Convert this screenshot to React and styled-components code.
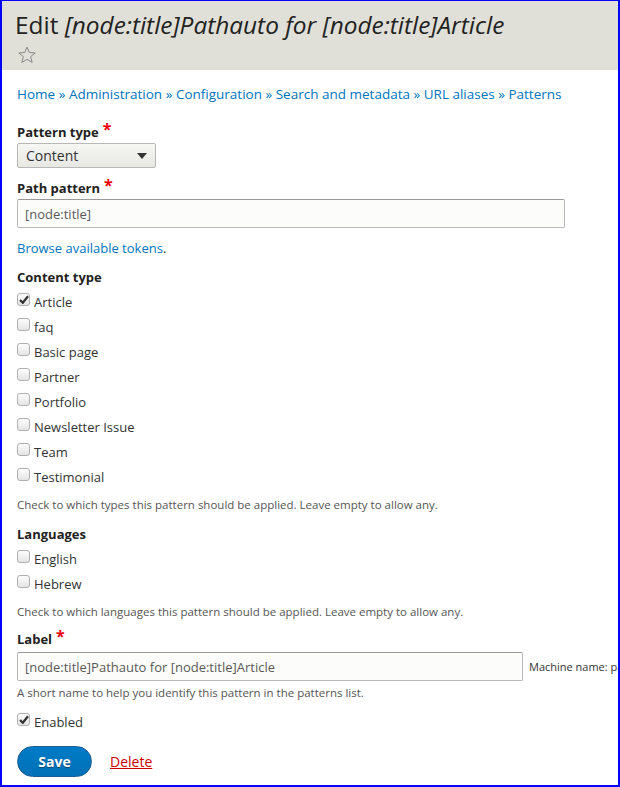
import React from "react";
import styled, { createGlobalStyle } from "styled-components";

const Global = createGlobalStyle`
  html, body { margin: 0; padding: 0; background: #fff; }
  body { font-family: "Open Sans", "DejaVu Sans", sans-serif; color: #333; }
  * { box-sizing: border-box; }
`;

const Frame = styled.div`
  width: 620px;
  height: 787px;
  border: 2px solid #0000ff;
  border-top-width: 1px;
  overflow: hidden;
  background: #fff;
`;

const Header = styled.div`
  background: #e0e0d8;
  padding: 7px 15px 0 13px;
  height: 69px;
`;

const Title = styled.h1`
  margin: 0;
  font-size: 24.4px;
  font-weight: normal;
  color: #222;
  line-height: 34px;
  white-space: nowrap;
  em { font-style: italic; }
`;

const Star = styled.div`
  margin-top: 3px;
  margin-left: 2px;
  height: 22px;
`;

const Content = styled.div`
  padding: 14px 15px 0 15px;
  width: 700px;
`;

const Breadcrumb = styled.div`
  font-size: 13.5px;
  line-height: 20px;
  color: #0074bd;
  margin-bottom: 16px;
`;

const Link = styled.a`
  color: ${(p) => (p.$danger ? "#c00" : "#0074bd")};
  text-decoration: ${(p) => (p.$danger ? "underline" : "none")};
  cursor: pointer;
`;

const TokenLine = styled.div`
  font-size: 13px;
  line-height: 20px;
  color: #333;
`;

const Field = styled.div`
  margin-bottom: ${(p) => p.$gap || 10}px;
`;

const Label = styled.div`
  font-size: 13px;
  font-weight: bold;
  line-height: 18px;
  color: #222;
  margin-bottom: ${(p) => p.$mb ?? 2}px;
`;

const Req = styled.span`
  color: #e00;
  margin-left: 4px;
  font-size: 16px;
  vertical-align: 2px;
`;

const Select = styled.div`
  width: 139px;
  height: 25px;
  border: 1px solid #b8b8b8;
  border-radius: 2px;
  background: linear-gradient(#f6f6f3, #e8e8e3);
  font-size: 14px;
  padding: 0 8px;
  display: flex;
  align-items: center;
  justify-content: space-between;
  color: #333;
`;

const Arrow = styled.span`
  width: 0;
  height: 0;
  border-left: 5px solid transparent;
  border-right: 5px solid transparent;
  border-top: 6px solid #333;
`;

const InputRow = styled.div`
  display: flex;
  align-items: center;
  gap: 6px;
`;

const Input = styled.div`
  flex-shrink: 0;
  width: ${(p) => p.$w}px;
  height: 29px;
  border: 1px solid #b8b8b8;
  border-top-color: #999;
  border-radius: 2px;
  background: #fcfcfa;
  font-size: 13px;
  color: #595959;
  padding: 0 7px;
  display: flex;
  align-items: center;
`;

const Machine = styled.span`
  font-size: 11px;
  color: #333;
  white-space: nowrap;
`;

const Checks = styled.div`
  display: flex;
  flex-direction: column;
`;

const CheckRow = styled.label`
  display: flex;
  align-items: center;
  height: 25px;
  font-size: 13px;
  color: #333;
  gap: 4px;
`;

const Box = styled.span`
  width: 13px;
  height: 13px;
  border: 1px solid #b0b0b0;
  border-radius: 3px;
  background: linear-gradient(#fdfdfd, #e4e4e4);
  display: flex;
  align-items: center;
  justify-content: center;
  margin-top: -4px;
`;

const Desc = styled.div`
  font-size: 11.5px;
  color: #555;
  line-height: 16px;
  margin-top: ${(p) => p.$mt ?? 8}px;
`;

const Actions = styled.div`
  display: flex;
  align-items: center;
  gap: 18px;
  margin-top: 12px;
  font-size: 14px;
`;

const SaveButton = styled.button`
  width: 75px;
  height: 31px;
  border-radius: 16px;
  border: 1px solid #1e5c90;
  background: linear-gradient(#007bc6, #0071b8);
  color: #fff;
  font-family: inherit;
  font-weight: bold;
  font-size: 14px;
  text-shadow: 0 1px 1px rgba(0, 0, 0, 0.4);
`;

const Check = ({ checked, children }) => (
  <CheckRow>
    <Box>
      {checked && (
        <svg width="10" height="9" viewBox="0 0 10 9">
          <path d="M1 5 L3.8 7.8 L9 1.2" fill="none" stroke="#333" strokeWidth="2.2" />
        </svg>
      )}
    </Box>
    {children}
  </CheckRow>
);

const crumbs = [
  "Home",
  "Administration",
  "Configuration",
  "Search and metadata",
  "URL aliases",
  "Patterns",
];

const contentTypes = [
  "Article",
  "faq",
  "Basic page",
  "Partner",
  "Portfolio",
  "Newsletter Issue",
  "Team",
  "Testimonial",
];

const App = () => {
  return (
    <Frame>
      <Global />
      <Header>
        <Title>
          Edit <em>[node:title]Pathauto for [node:title]Article</em>
        </Title>
        <Star>
          <svg width="20" height="20" viewBox="0 0 24 24">
            <path
              d="M12 2.5 L14.8 9 L21.8 9.5 L16.4 14 L18.2 21 L12 17.2 L5.8 21 L7.6 14 L2.2 9.5 L9.2 9 Z"
              fill="none"
              stroke="#888"
              strokeWidth="1.2"
              strokeLinejoin="round"
            />
          </svg>
        </Star>
      </Header>
      <Content>
        <Breadcrumb>
          {crumbs.map((c, i) => (
            <React.Fragment key={c}>
              {i > 0 && " » "}
              <Link>{c}</Link>
            </React.Fragment>
          ))}
        </Breadcrumb>

        <Field $gap={8}>
          <Label>
            Pattern type<Req>*</Req>
          </Label>
          <Select>
            Content <Arrow />
          </Select>
        </Field>

        <Field $gap={10}>
          <Label>
            Path pattern<Req>*</Req>
          </Label>
          <Input $w={548}>[node:title]</Input>
        </Field>

        <Field $gap={10}>
          <TokenLine>
            <Link>Browse available tokens</Link>.
          </TokenLine>
        </Field>

        <Field $gap={12}>
          <Label $mb={3}>Content type</Label>
          <Checks>
            {contentTypes.map((t, i) => (
              <Check key={t} checked={i === 0}>
                {t}
              </Check>
            ))}
          </Checks>
          <Desc>Check to which types this pattern should be applied. Leave empty to allow any.</Desc>
        </Field>

        <Field $gap={7}>
          <Label $mb={3}>Languages</Label>
          <Checks>
            <Check>English</Check>
            <Check>Hebrew</Check>
          </Checks>
          <Desc>Check to which languages this pattern should be applied. Leave empty to allow any.</Desc>
        </Field>

        <Field $gap={8}>
          <Label $mb={4}>
            Label<Req>*</Req>
          </Label>
          <InputRow>
            <Input $w={506}>[node:title]Pathauto for [node:title]Article</Input>
            <Machine>Machine name: pathauto_for_node_title_article</Machine>
          </InputRow>
          <Desc $mt={4}>A short name to help you identify this pattern in the patterns list.</Desc>
        </Field>

        <Checks>
          <Check checked>Enabled</Check>
        </Checks>

        <Actions>
          <SaveButton>Save</SaveButton>
          <Link $danger>Delete</Link>
        </Actions>
      </Content>
    </Frame>
  );
};

export default App;
